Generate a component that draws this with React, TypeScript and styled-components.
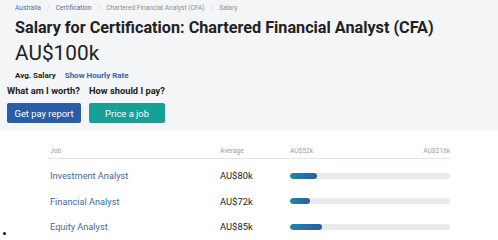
import styled, { createGlobalStyle } from "styled-components";

const Global = createGlobalStyle`
  body {
    margin: 0;
    background: #ffffff;
    font-family: Roboto, "Liberation Sans", sans-serif;
    color: #222;
  }
`;

const rows = [
  { job: "Investment Analyst", avg: 80 },
  { job: "Financial Analyst", avg: 72 },
  { job: "Equity Analyst", avg: 85 },
];

const MIN = 52;
const MAX = 216;

const Hero = styled.div`
  background: #f4f5f7;
  padding: 0 0 10px 15px;
  height: 120px;
`;

const Crumbs = styled.div`
  display: flex;
  align-items: center;
  gap: 6px;
  font-size: 6.6px;
  height: 15px;
`;

const Crumb = styled.span<{ $link?: boolean }>`
  color: ${(p) => (p.$link ? "#4a72a4" : "#8d9095")};
`;

const Sep = styled.span`
  color: #d6d8dc;
`;

const Title = styled.h1`
  margin: 2px 0 0;
  font-size: 16.2px;
  font-weight: 700;
  color: #222;
  line-height: 22px;
`;

const Amount = styled.div`
  font-size: 20.8px;
  line-height: 26px;
  margin-top: 1px;
  color: #222;
`;

const AvgRow = styled.div`
  display: flex;
  gap: 9px;
  margin-top: 4px;
  font-size: 8px;
  font-weight: 700;
  line-height: 12px;
`;

const Hourly = styled.span`
  color: #3763a6;
`;

const Actions = styled.div`
  display: flex;
  gap: 8px;
  margin-left: -8px;
  margin-top: 2px;
`;

const Action = styled.div<{ $w: number }>`
  display: flex;
  flex-direction: column;
  gap: 5px;
  width: ${(p) => p.$w}px;
  white-space: nowrap;
`;

const Ask = styled.div`
  font-size: 9.3px;
  font-weight: 700;
  line-height: 14px;
  color: #222;
`;

const Button = styled.div<{ $tone: string }>`
  height: 20px;
  border-radius: 2px;
  background: ${(p) => p.$tone};
  color: #fff;
  font-size: 9.4px;
  display: flex;
  align-items: center;
  justify-content: center;
`;

const Table = styled.div`
  margin: 12px 0 0 48px;
  width: 402px;
  position: relative;
`;

const Grid = styled.div`
  display: grid;
  grid-template-columns: 170px 71px 161px;
  align-items: center;
`;

const Head = styled(Grid)`
  border-bottom: 1px solid #e4e5e8;
  height: 17px;
  align-items: end;
  box-sizing: border-box;
  padding-bottom: 3px;
  font-size: 6.6px;
  color: #9a9da2;
`;

const HeadCell = styled.div`
  padding-left: 2px;
`;

const Range = styled.div`
  display: flex;
  justify-content: space-between;
  padding-left: 1px;
`;

const Row = styled(Grid)`
  height: 25.5px;
`;

const JobName = styled.div`
  padding-left: 2px;
  font-size: 9.2px;
  color: #3f6a9e;
  padding-top: 8px;
`;

const Avg = styled.div`
  font-size: 9.4px;
  color: #222;
  padding-left: 2px;
  padding-top: 8px;
`;

const Track = styled.div`
  margin-top: 8px;
  margin-left: 1px;
  height: 6px;
  border-radius: 3px;
  background: #e9eaee;
  overflow: hidden;
`;

const Fill = styled.div`
  height: 100%;
  border-radius: 3px;
  background: linear-gradient(90deg, #1b8aa0, #2a5caa);
`;

const Dot = styled.div`
  position: absolute;
  left: -45px;
  bottom: 1px;
  width: 3px;
  height: 3px;
  border-radius: 50%;
  background: #111;
`;

export default function App() {
  return (
    <>
      <Global />
      <Hero>
        <Crumbs>
          <Crumb $link>Australia</Crumb>
          <Sep>/</Sep>
          <Crumb $link>Certification</Crumb>
          <Sep>/</Sep>
          <Crumb>Chartered Financial Analyst (CFA)</Crumb>
          <Sep>/</Sep>
          <Crumb>Salary</Crumb>
        </Crumbs>
        <Title>Salary for Certification: Chartered Financial Analyst (CFA)</Title>
        <Amount>AU$100k</Amount>
        <AvgRow>
          <span>Avg. Salary</span>
          <Hourly>Show Hourly Rate</Hourly>
        </AvgRow>
        <Actions>
          <Action $w={74}>
            <Ask>What am I worth?</Ask>
            <Button $tone="#2b5ca8">Get pay report</Button>
          </Action>
          <Action $w={76}>
            <Ask>How should I pay?</Ask>
            <Button $tone="#16a096">Price a job</Button>
          </Action>
        </Actions>
      </Hero>
      <Table>
        <Head>
          <HeadCell>Job</HeadCell>
          <HeadCell>Average</HeadCell>
          <Range>
            <span>AU$52k</span>
            <span>AU$216k</span>
          </Range>
        </Head>
        {rows.map((r) => (
          <Row key={r.job}>
            <JobName>{r.job}</JobName>
            <Avg>AU${r.avg}k</Avg>
            <Track>
              <Fill style={{ width: `${((r.avg - MIN) / (MAX - MIN)) * 100}%` }} />
            </Track>
          </Row>
        ))}
        <Dot />
      </Table>
    </>
  );
}
